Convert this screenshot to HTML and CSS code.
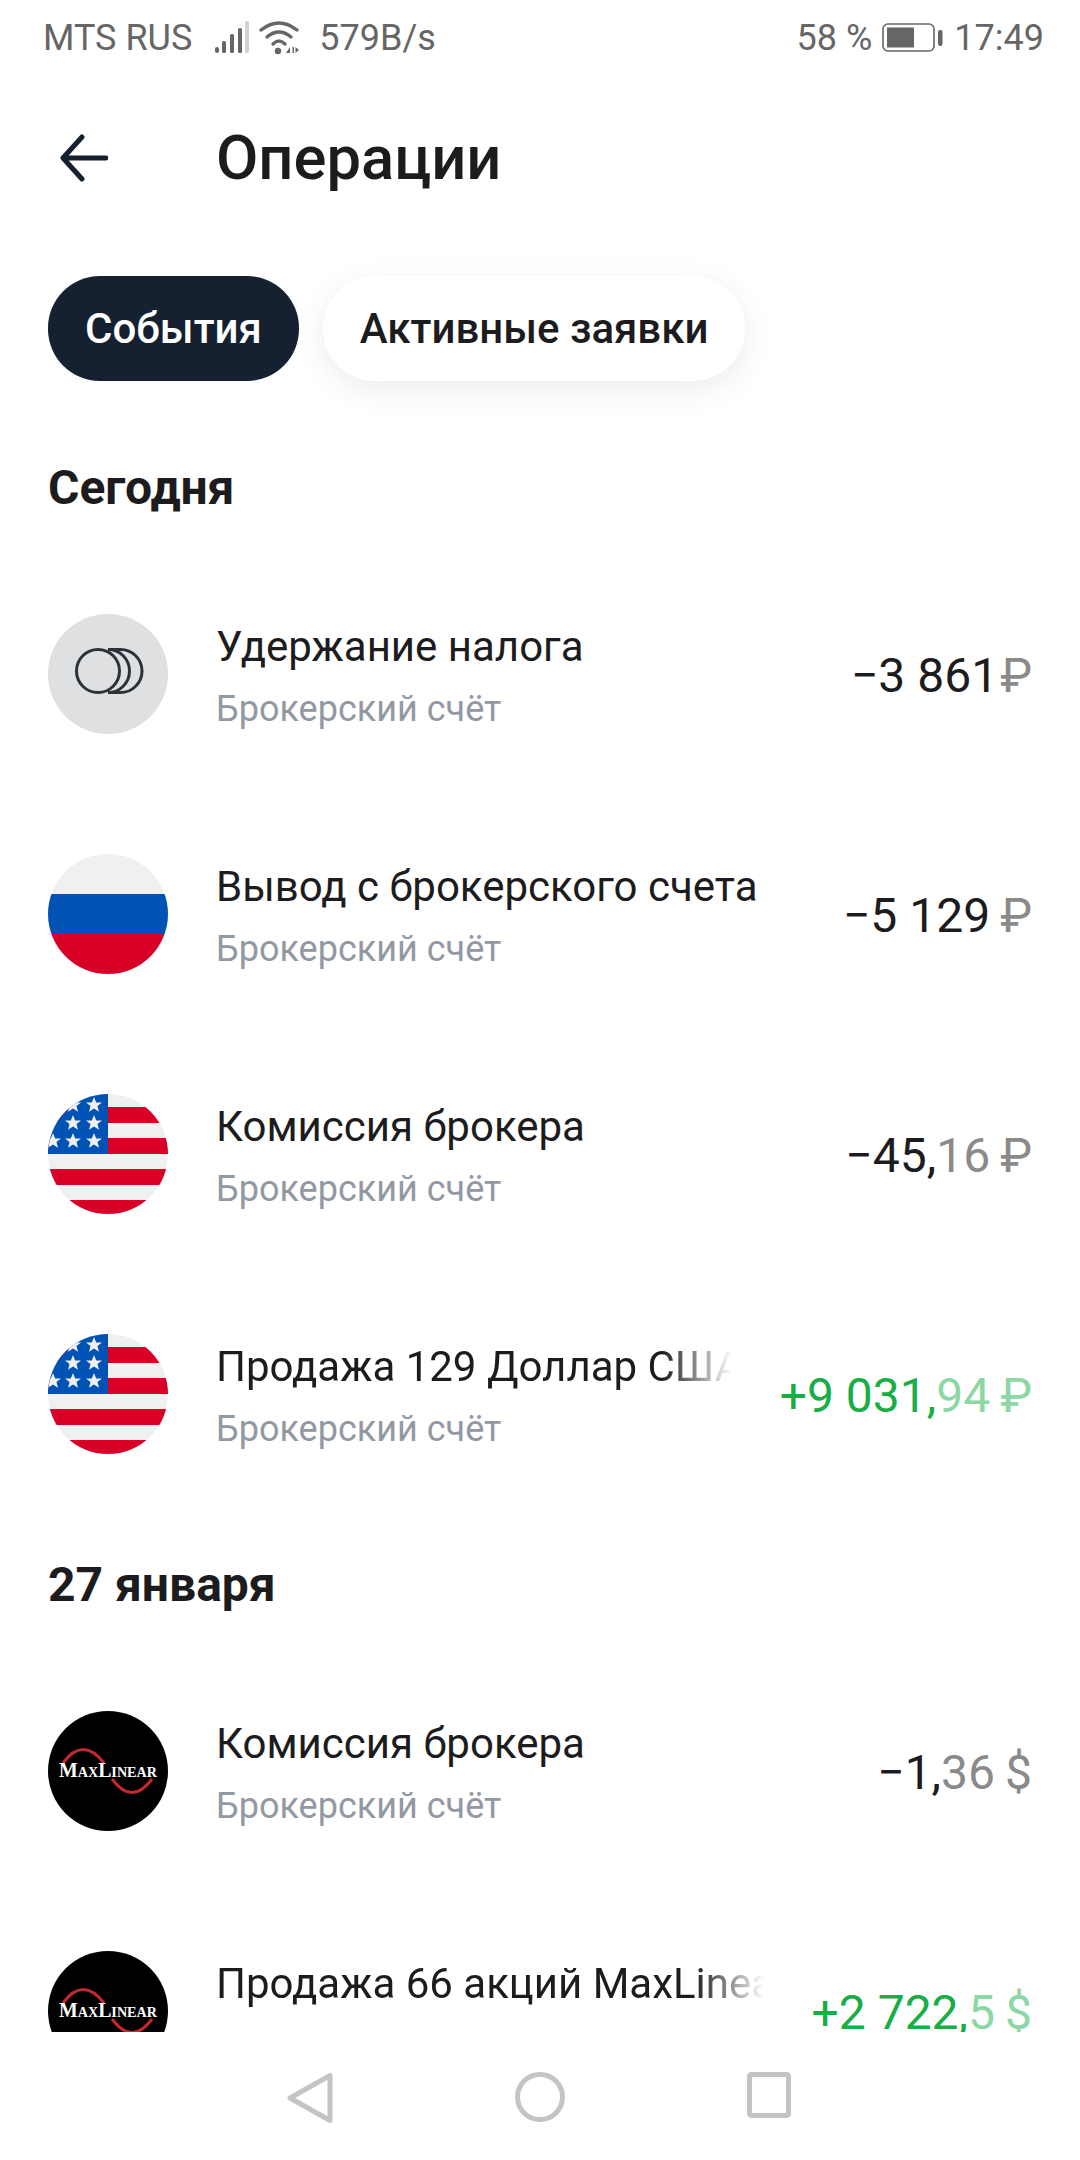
FILE: index.html
```html
<!DOCTYPE html>
<html lang="ru">
<head>
<meta charset="utf-8">
<title>Операции</title>
<link rel="stylesheet" href="styles.css">
</head>
<body>
<svg class="defs" width="0" height="0" aria-hidden="true">
  <defs>
    <clipPath id="round"><circle cx="60" cy="60" r="60"/></clipPath>
    <polygon id="star" points="0,-8 2.2,-2.6 8,-2.5 3.5,1.1 5,6.8 0,3.6 -5,6.8 -3.5,1.1 -8,-2.5 -2.2,-2.6"/>
    <g id="us" clip-path="url(#round)">
      <rect width="120" height="120" fill="#f0f0f0"/>
      <g fill="#d80027">
        <rect y="13" width="120" height="16"/>
        <rect y="44" width="120" height="16"/>
        <rect y="75" width="120" height="16"/>
        <rect y="106" width="120" height="14"/>
      </g>
      <rect width="60" height="60" fill="#0052b4"/>
      <g fill="#f0f0f0">
        <use href="#star" x="46" y="11"/>
        <use href="#star" x="25" y="11"/>
        <use href="#star" x="46" y="29"/>
        <use href="#star" x="25" y="29"/>
        <use href="#star" x="46" y="47"/>
        <use href="#star" x="25" y="47"/>
        <use href="#star" x="5" y="47"/>
      </g>
    </g>
    <g id="mxl">
      <circle cx="60" cy="60" r="60" fill="#000"/>
      <path d="M15 52Q35 25 56 52" fill="none" stroke="#c4282d" stroke-width="3"/>
      <path d="M64 68Q84 95 104 68" fill="none" stroke="#c4282d" stroke-width="3"/>
      <text x="11" y="66" class="mxl-text" textLength="98" lengthAdjust="spacingAndGlyphs">MaxLinear</text>
    </g>
  </defs>
</svg>
<div class="phone">
  <div class="status">
    <span>MTS RUS</span>
    <svg class="ic-signal" width="36" height="36" viewBox="0 0 36 36">
      <g fill="#666">
        <rect x="1" y="27" width="4" height="6" rx="2"/>
        <rect x="8" y="21" width="4" height="12" rx="1.5"/>
        <rect x="16" y="14" width="4" height="19" rx="1.5"/>
        <rect x="24" y="8" width="4" height="25" rx="1.5"/>
      </g>
      <rect x="31" y="1" width="4" height="32" rx="1.5" fill="#d2d2d2"/>
    </svg>
    <svg class="ic-wifi" width="40" height="36" viewBox="0 0 40 36">
      <g fill="none" stroke="#666" stroke-width="3.4" stroke-linecap="round">
        <path d="M2 10Q20 -4 38 10"/>
        <path d="M8 17Q20 7 32 17"/>
        <path d="M14 24Q20 18 26 24"/>
      </g>
      <circle cx="19" cy="31" r="3.2" fill="#666"/>
      <path d="M27 33l4-6v6zM33.500 27h1.500v6h-1.500zM36.500 27l3.500 3-3.500 3z" fill="#666"/>
    </svg>
    <span class="speed">579B/s</span>
    <span class="status-right">58 %</span>
    <svg class="ic-batt" width="62" height="30" viewBox="0 0 62 30">
      <rect x="1" y="1" width="51" height="27" rx="5" fill="none" stroke="#666" stroke-width="1.600"/>
      <rect x="5" y="4.500" width="27" height="20" fill="#666"/>
      <rect x="56" y="7" width="4.500" height="16" rx="2" fill="#666"/>
    </svg>
    <span>17:49</span>
  </div>

  <header class="header">
    <svg class="ic-back" width="48" height="48" viewBox="0 0 48 48">
      <path d="M46 24H4M22 3L3 24l19 21" fill="none" stroke="#152030" stroke-width="5" stroke-linecap="round" stroke-linejoin="round"/>
    </svg>
    <h1 class="title">Операции</h1>
  </header>

  <div class="tabs">
    <div class="tab active">События</div>
    <div class="tab">Активные заявки</div>
  </div>

  <main class="list">
    <h2 class="day first">Сегодня</h2>

    <div class="row">
      <svg class="avatar" viewBox="0 0 120 120">
        <circle cx="60" cy="60" r="60" fill="#dee0e2"/>
        <g fill="none" stroke="#2d323a" stroke-width="3">
          <path d="M60 35.500H72.500A21.500 21.500 0 0 1 72.500 78.500H60"/>
          <path d="M60 35.500A21.500 21.500 0 0 1 60 78.500"/>
          <circle cx="50" cy="57" r="21.500"/>
        </g>
      </svg>
      <div class="info">
        <div class="name">Удержание налога</div>
        <div class="sub">Брокерский счёт</div>
      </div>
      <div class="amount">−3 861<span class="cur tight">₽</span></div>
    </div>

    <div class="row">
      <svg class="avatar" viewBox="0 0 120 120">
        <g clip-path="url(#round)">
          <rect width="120" height="40" fill="#f0f0f0"/>
          <rect y="40" width="120" height="40" fill="#0052b4"/>
          <rect y="80" width="120" height="40" fill="#d80027"/>
        </g>
      </svg>
      <div class="info">
        <div class="name">Вывод с брокерского счета</div>
        <div class="sub">Брокерский счёт</div>
      </div>
      <div class="amount">−5 129<span class="cur">₽</span></div>
    </div>

    <div class="row">
      <svg class="avatar" viewBox="0 0 120 120"><use href="#us"/></svg>
      <div class="info">
        <div class="name">Комиссия брокера</div>
        <div class="sub">Брокерский счёт</div>
      </div>
      <div class="amount">−45,<span class="frac">16</span><span class="cur">₽</span></div>
    </div>

    <div class="row">
      <svg class="avatar" viewBox="0 0 120 120"><use href="#us"/></svg>
      <div class="info">
        <div class="name fade">Продажа 129 Доллар США</div>
        <div class="sub">Брокерский счёт</div>
      </div>
      <div class="amount plus">+9 031,<span class="frac">94</span><span class="cur">₽</span></div>
    </div>

    <h2 class="day">27 января</h2>

    <div class="row">
      <svg class="avatar" viewBox="0 0 120 120"><use href="#mxl"/></svg>
      <div class="info">
        <div class="name">Комиссия брокера</div>
        <div class="sub">Брокерский счёт</div>
      </div>
      <div class="amount">−1,<span class="frac">36</span><span class="cur">$</span></div>
    </div>

    <div class="row">
      <svg class="avatar" viewBox="0 0 120 120"><use href="#mxl"/></svg>
      <div class="info">
        <div class="name fade">Продажа 66 акций MaxLinear</div>
        <div class="sub">Брокерский счёт</div>
      </div>
      <div class="amount plus">+2 722,<span class="frac">5</span><span class="cur">$</span></div>
    </div>
  </main>

  <nav class="nav">
    <svg width="46" height="52" viewBox="0 0 46 52"><path d="M43 3.500V48.500L3 26Z" fill="none" stroke="#c4c4c4" stroke-width="5" stroke-linejoin="round"/></svg>
    <svg width="50" height="50" viewBox="0 0 50 50"><circle cx="25" cy="25" r="22.500" fill="none" stroke="#c4c4c4" stroke-width="5"/></svg>
    <svg width="44" height="46" viewBox="0 0 44 46"><rect x="2.500" y="2.500" width="39" height="41" rx="2" fill="none" stroke="#c4c4c4" stroke-width="5"/></svg>
  </nav>
</div>
</body>
</html>
```

FILE: styles.css
```css
* { box-sizing: border-box; }

html, body {
  margin: 0;
  padding: 0;
  background: #fff;
}

body {
  font-family: Roboto, "Liberation Sans", sans-serif;
  color: #1c1c1e;
}

.defs {
  display: block;
  height: 0;
}

.mxl-text {
  font-family: "Liberation Serif", serif;
  font-variant: small-caps;
  font-weight: 700;
  font-size: 21px;
  fill: #fff;
}

.phone {
  width: 1080px;
  height: 2160px;
  display: flex;
  flex-direction: column;
  overflow: hidden;
  background: #fff;
}

.status {
  height: 76px;
  padding: 0 36px 0 43px;
  display: flex;
  align-items: center;
  font-size: 36px;
  color: #666;
  flex: none;
}

.ic-signal { margin-left: 22px; }
.ic-wifi { margin-left: 9px; }
.speed { margin-left: 20px; }
.status-right { margin-left: auto; }
.ic-batt { margin-left: 10px; margin-right: 10px; }

.header {
  height: 164px;
  padding: 0 0 0 60px;
  display: flex;
  align-items: center;
  flex: none;
}

.title {
  margin: 0 0 0 108px;
  font-size: 61.5px;
  font-weight: 500;
  line-height: 64px;
  color: #1c1c1e;
}

.tabs {
  display: flex;
  gap: 24px;
  padding: 36px 0 0 48px;
  flex: none;
}

.tab {
  height: 105px;
  padding: 0 37px;
  border-radius: 52px;
  display: flex;
  align-items: center;
  font-size: 42px;
  font-weight: 500;
  background: #fff;
  color: #1c1c1e;
  box-shadow: 0 8px 32px rgba(0, 0, 0, 0.08);
}

.tab.active {
  background: #152030;
  color: #fff;
  box-shadow: none;
}

.list {
  flex: 1;
  min-height: 0;
  overflow: hidden;
  padding: 0 48px;
}

.day {
  margin: 47px 0 42px;
  font-size: 48px;
  font-weight: 700;
  line-height: 48px;
}

.day.first { margin-top: 83px; }

.row {
  height: 240px;
  display: flex;
  align-items: center;
}

.avatar {
  width: 120px;
  height: 120px;
  flex: none;
  display: block;
}

.info {
  flex: 1;
  min-width: 0;
  margin-left: 48px;
  padding-top: 4px;
}

.name {
  font-size: 42px;
  line-height: 48px;
  white-space: nowrap;
  overflow: hidden;
}

.name.fade {
  -webkit-mask-image: linear-gradient(to left, transparent 0, #000 70px);
  mask-image: linear-gradient(to left, transparent 0, #000 70px);
}

.sub {
  margin-top: 18px;
  font-size: 36px;
  line-height: 40px;
  color: #9299a2;
  white-space: nowrap;
}

.amount {
  margin-left: 48px;
  padding-top: 4px;
  flex: none;
  font-size: 48px;
  line-height: 52px;
  white-space: nowrap;
  color: #1c1c1e;
}

.frac, .cur {
  color: #8a8a8a;
}

.cur {
  margin-left: 10px;
}

.cur.tight { margin-left: 2px; }

.plus { color: #17ae46; }
.plus .frac, .plus .cur { color: #8dd7a4; }

.nav {
  height: 128px;
  flex: none;
  display: flex;
  justify-content: center;
  align-items: flex-start;
  gap: 182px;
  padding-top: 40px;
  padding-right: 2px;
  background: #fff;
}
```
